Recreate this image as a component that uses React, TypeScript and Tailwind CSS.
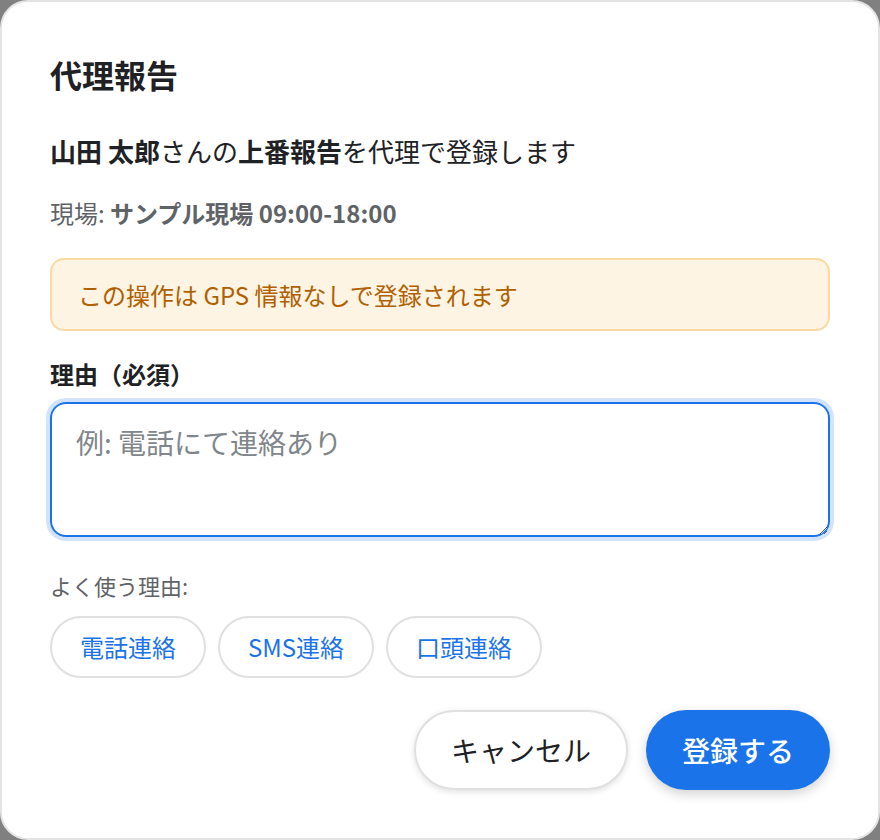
import { useState } from "react";

const QUICK_REASONS = ["電話連絡", "SMS連絡", "口頭連絡"];

export default function App() {
  const [reason, setReason] = useState("");

  return (
    <div
      className="h-[840px] w-[880px] bg-[#808080]"
      style={{ fontFamily: '"Noto Sans CJK JP", "Noto Sans", sans-serif' }}
    >
      <div className="flex h-full flex-col rounded-[28px] border-2 border-[#e3e3e3] bg-white px-[48px] pb-[48px] pt-[52px]">
        <h1 className="text-[32px] font-bold leading-[40px] text-[#202124]">
          代理報告
        </h1>

        <p className="mt-[41px] text-[26px] leading-[32px] text-[#202124]">
          <span className="font-bold">山田 太郎</span>さんの
          <span className="font-bold">上番報告</span>を代理で登録します
        </p>

        <p className="mt-[32px] text-[24px] leading-[28px] text-[#5f6368]">
          現場: <span className="font-bold">サンプル現場 09:00-18:00</span>
        </p>

        {/* GPS warning */}
        <div className="mt-[31px] flex h-[73px] items-center rounded-[14px] border-2 border-[#fad9a3] bg-[#fef4e3] px-[26px] text-[24px] text-[#b06000]">
          この操作は GPS 情報なしで登録されます
        </div>

        <label className="mt-[28px] text-[24px] font-bold leading-[30px] text-[#202124]">
          理由（必須）
        </label>
        <textarea
          value={reason}
          onChange={(e) => setReason(e.target.value)}
          placeholder="例: 電話にて連絡あり"
          className="mt-[13px] h-[135px] w-full rounded-[16px] border-2 border-[#1a73e8] px-[24px] pt-[20px] text-[28px] leading-[36px] text-[#202124] shadow-[0_0_0_4px_#d3e3fd] outline-none placeholder:text-[#80868b]"
        />

        <p className="mt-[35px] text-[22px] leading-[26px] text-[#5f6368]">
          よく使う理由:
        </p>
        <div className="mt-[18px] flex gap-[12px]">
          {QUICK_REASONS.map((r) => (
            <button
              key={r}
              type="button"
              onClick={() => setReason(r)}
              className="h-[62px] rounded-full border-2 border-[#e0e0e0] bg-white px-[28px] text-[24px] text-[#1a73e8]"
            >
              {r}
            </button>
          ))}
        </div>

        <div className="mt-[32px] flex justify-end gap-[18px]">
          <button
            type="button"
            className="h-[80px] rounded-full border-2 border-[#e0e0e0] bg-white px-[35px] text-[28px] text-[#202124] shadow-[0_2px_6px_rgba(0,0,0,0.12)]"
          >
            キャンセル
          </button>
          <button
            type="button"
            className="h-[80px] rounded-full bg-[#1a73e8] px-[36px] text-[28px] font-medium text-white shadow-[0_4px_12px_rgba(0,0,0,0.18)]"
          >
            登録する
          </button>
        </div>
      </div>
    </div>
  );
}
